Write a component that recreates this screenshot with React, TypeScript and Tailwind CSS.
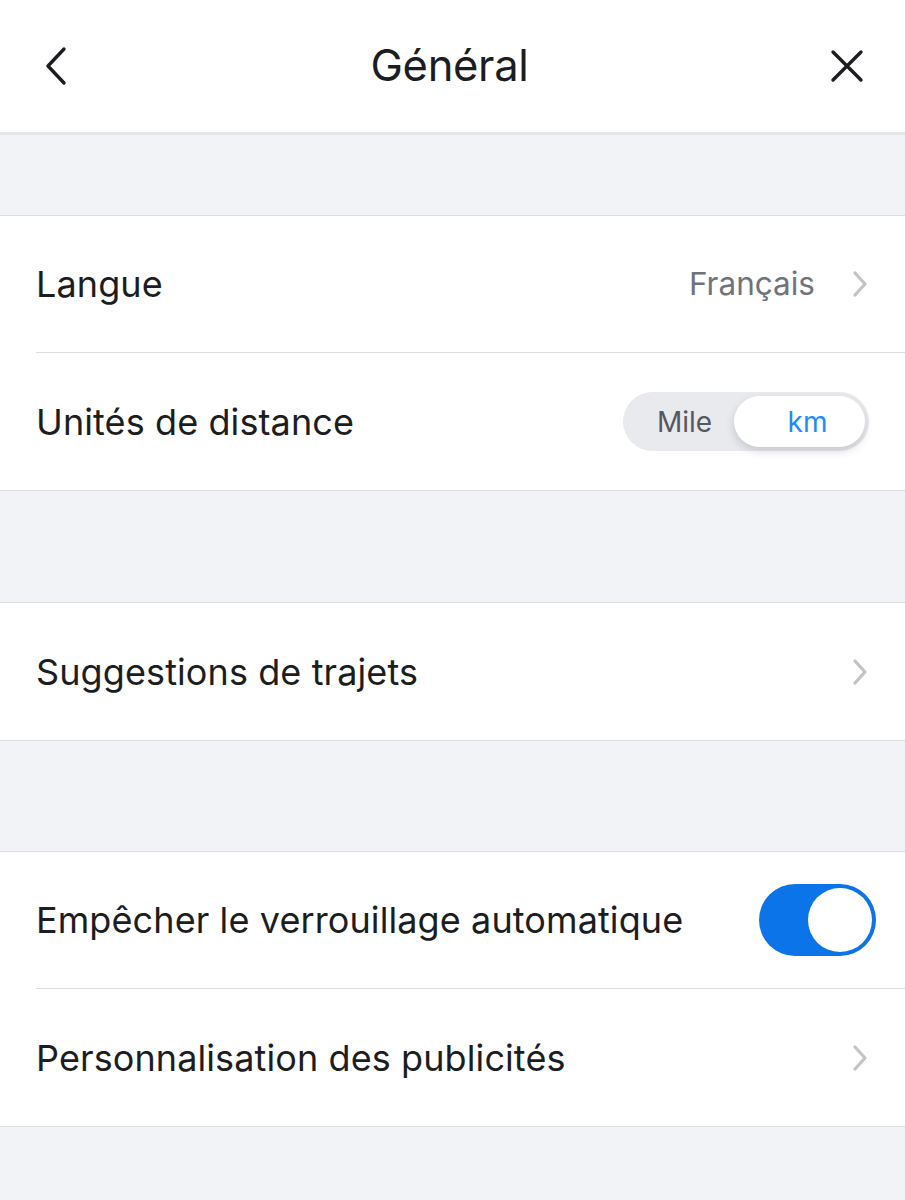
import React, { useState } from 'react';

const font = { fontFamily: 'Inter, "Noto Sans", sans-serif' };

function Chevron() {
  return (
    <svg width="18" height="28" viewBox="0 0 18 28" fill="none" className="shrink-0">
      <path d="M4 3l10 11-10 11" stroke="#c3c4c8" strokeWidth="3.2" strokeLinecap="round" strokeLinejoin="round" />
    </svg>
  );
}

function Row({ label, children, divider }: { label: string; children?: React.ReactNode; divider?: boolean }) {
  return (
    <div className="bg-white pl-9">
      <div className={`flex h-[137px] items-center justify-between pr-9 ${divider ? 'border-b border-[#dcdde0]' : ''}`}>
        <span className="text-[36px] text-[#1c1d21] tracking-[0.1px]">{label}</span>
        {children}
      </div>
    </div>
  );
}

function Gap({ h }: { h: string }) {
  return <div className={`${h} bg-[#f2f3f7] border-b border-[#dcdde0]`} />;
}

export default function App() {
  const [unit, setUnit] = useState<'mile' | 'km'>('km');
  const [lock, setLock] = useState(true);

  return (
    <div className="min-h-[1200px] w-[905px] bg-[#f2f3f7]" style={font}>
      {/* header */}
      <div className="flex h-[135px] items-center justify-between bg-white px-11 border-b-[3px] border-[#e6e7ea]">
        <svg width="26" height="40" viewBox="0 0 26 40" fill="none">
          <path d="M20 3L4 20l16 17" stroke="#1c1d21" strokeWidth="3.4" strokeLinecap="round" strokeLinejoin="round" />
        </svg>
        <h1 className="text-[43.5px] text-[#1c1d21] tracking-[-0.3px]">Général</h1>
        <svg width="36" height="36" viewBox="0 0 36 36" fill="none" className="-mr-[4px]">
          <path d="M4 4l28 28M32 4L4 32" stroke="#1c1d21" strokeWidth="3.4" strokeLinecap="round" />
        </svg>
      </div>

      <Gap h="h-[81px]" />

      <Row label="Langue" divider>
        <div className="flex items-center gap-9">
          <span className="text-[31.5px] text-[#70737b]">Français</span>
          <Chevron />
        </div>
      </Row>
      <Row label="Unités de distance">
        <div className="flex h-[59px] w-[246px] items-center rounded-full bg-[#e9eaee] p-[4px]">
          <button
            onClick={() => setUnit('mile')}
            className={`flex h-full w-[107px] items-center justify-center rounded-full pl-2 text-[28px] ${unit === 'mile' ? 'bg-white text-[#1a8cff] shadow-[0_4px_10px_rgba(0,0,0,0.15)]' : 'text-[#55585f]'}`}
          >
            Mile
          </button>
          <button
            onClick={() => setUnit('km')}
            className={`flex h-full flex-1 items-center justify-center rounded-full pl-4 text-[28px] ${unit === 'km' ? 'bg-white text-[#1a8cff] shadow-[0_4px_10px_rgba(0,0,0,0.15)]' : 'text-[#55585f]'}`}
          >
            km
          </button>
        </div>
      </Row>
      <div className="border-b border-[#dcdde0]" />

      <Gap h="h-[112px]" />

      <Row label="Suggestions de trajets">
        <Chevron />
      </Row>
      <div className="border-b border-[#dcdde0]" />

      <Gap h="h-[111px]" />

      <Row label="Empêcher le verrouillage automatique" divider>
        <button
          onClick={() => setLock(!lock)}
          className={`-mr-[7px] flex h-[72px] w-[117px] items-center rounded-full p-[4px] ${lock ? 'justify-end bg-[#0a74e8]' : 'justify-start bg-[#e4e5e8]'}`}
        >
          <span className="block h-[64px] w-[64px] rounded-full bg-white" />
        </button>
      </Row>
      <Row label="Personnalisation des publicités">
        <Chevron />
      </Row>
      <div className="border-b border-[#dcdde0]" />
    </div>
  );
}
